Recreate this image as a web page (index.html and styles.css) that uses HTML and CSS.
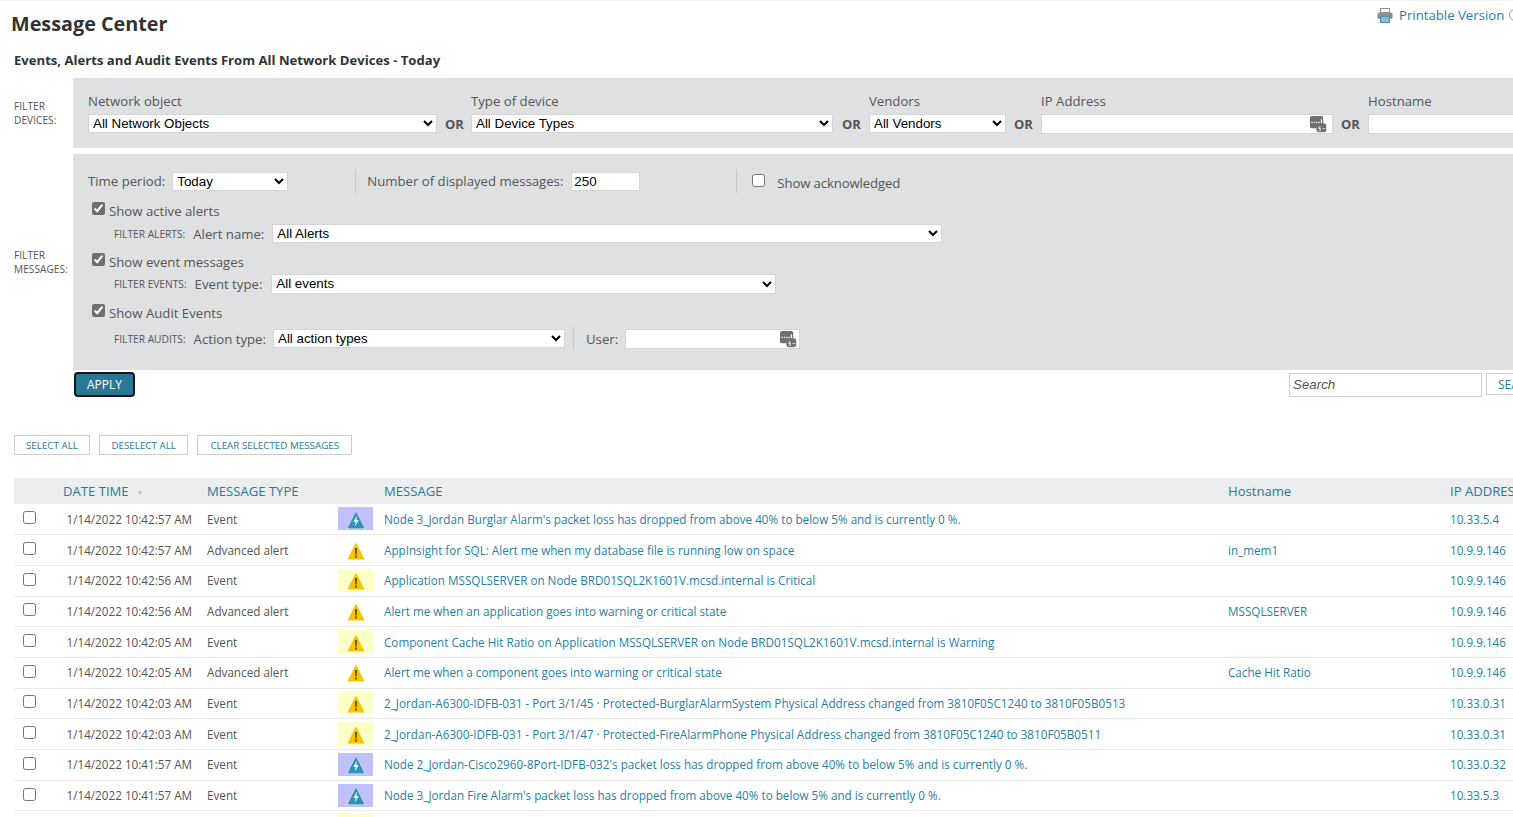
FILE: index.html
```html
<!DOCTYPE html>
<html lang="en">
<head>
<meta charset="utf-8">
<title>Message Center</title>
<link rel="stylesheet" href="styles.css">
</head>
<body>
<svg class="defs" width="0" height="0" aria-hidden="true">
  <symbol id="ico-crit" viewBox="0 0 20 20">
    <path d="M10 2 19.2 20H.8z" fill="#fff" opacity=".7"/>
    <path d="M10 3.5 17.8 19H2.2z" fill="#2e93b4" stroke="#2e93b4" stroke-linejoin="round"/>
    <path d="M11 6.5 7.4 13h2.3l-.9 4.5 3.9-6.6h-2.3z" fill="#fff"/>
  </symbol>
  <symbol id="ico-warn" viewBox="0 0 20 20">
    <path d="M10 4 17.4 18.8H2.6z" fill="#f6c500" stroke="#f6c500" stroke-width="1.6" stroke-linejoin="round"/>
    <path d="M8.9 8h2.2L10.7 14.5H9.3zM9 15.4h2v2.2H9z" fill="#6b5200"/>
  </symbol>
  <symbol id="ico-ip" viewBox="0 0 18 18">
    <rect x="0" y="0" width="14" height="13" rx="2" fill="#6f6f6f"/>
    <rect x="7" y="8" width="10" height="9" rx="2" fill="#6f6f6f" stroke="#8a8a8a" stroke-width=".5"/>
    <path d="M1.5 6h1.4v1.4H1.5zM4 6h1.4v1.4H4zM6.5 6h1.4v1.4H6.5zM9 6h1.4v1.4H9zM11.5 3.5h1.2v3.9h-1.2z" fill="#fff"/>
    <path d="M9 11h2.4v1H10v.6h1.4V15.5H9v-.8h1.4v-1H9zM13 12.6h3v1h-3z" fill="#e8e8e8"/>
  </symbol>
</svg>
<div class="page">
  <header class="top">
    <h1 class="title">Message Center</h1>
    <div class="print">
      <svg class="print-ico" width="16" height="15" viewBox="0 0 16 15">
        <rect x="3.5" y=".5" width="9" height="4" fill="none" stroke="#8a9299"/>
        <rect x=".5" y="4.5" width="15" height="6.5" rx="1.5" fill="#8a9299"/>
        <rect x="3.5" y="8.5" width="9" height="6" fill="#7cc0dc" stroke="#5c8ea6"/>
      </svg>
      <a class="print-link">Printable Version</a>
      <span class="info-circle"></span>
    </div>
  </header>
  <h2 class="subtitle">Events, Alerts and Audit Events From All Network Devices - Today</h2>

  <section class="filter-block devices">
    <div class="side-label">FILTER<br>DEVICES:</div>
    <div class="panel panel-devices">
      <div class="field f-object"><label class="flabel">Network object</label><select class="sel"><option>All Network Objects</option></select></div>
      <span class="or or-first">OR</span>
      <div class="field f-type"><label class="flabel">Type of device</label><select class="sel"><option>All Device Types</option></select></div>
      <span class="or or-wide">OR</span>
      <div class="field f-vendor"><label class="flabel">Vendors</label><select class="sel"><option>All Vendors</option></select></div>
      <span class="or">OR</span>
      <div class="field f-ip"><label class="flabel">IP Address</label><div class="input-ico tall"><svg class="ip-ico"><use href="#ico-ip"/></svg></div></div>
      <span class="or">OR</span>
      <div class="field f-host"><label class="flabel">Hostname</label><div class="input-ico tall"></div></div>
    </div>
  </section>

  <section class="filter-block messages">
    <div class="side-label side-msg">FILTER<br>MESSAGES:</div>
    <div class="panel panel-messages">
      <div class="row-time">
        <span class="lbl">Time period:</span>
        <select class="sel sel-time"><option>Today</option></select>
        <span class="vsep sep-a"></span>
        <span class="lbl">Number of displayed messages:</span>
        <input class="txt txt-num" type="text" value="250">
        <span class="vsep sep-b"></span>
        <input class="chk chk-plain" type="checkbox">
        <span class="lbl lbl-ack">Show acknowledged</span>
      </div>
      <div class="chk-row chk-first"><input class="chk chk-on" type="checkbox" checked><span class="lbl">Show active alerts</span></div>
      <div class="sub-row sub-alerts"><span class="mini">FILTER ALERTS:</span><span class="lbl">Alert name:</span><select class="sel sel-alert"><option>All Alerts</option></select></div>
      <div class="chk-row"><input class="chk chk-on" type="checkbox" checked><span class="lbl">Show event messages</span></div>
      <div class="sub-row sub-events"><span class="mini">FILTER EVENTS:</span><span class="lbl">Event type:</span><select class="sel sel-event"><option>All events</option></select></div>
      <div class="chk-row"><input class="chk chk-on" type="checkbox" checked><span class="lbl">Show Audit Events</span></div>
      <div class="sub-row sub-audits"><span class="mini">FILTER AUDITS:</span><span class="lbl">Action type:</span><select class="sel sel-action"><option>All action types</option></select><span class="vsep sep-c"></span><span class="lbl">User:</span><div class="input-ico user"><svg class="ip-ico"><use href="#ico-ip"/></svg></div></div>
    </div>
  </section>

  <div class="actions">
    <button class="apply" type="button">APPLY</button>
    <div class="search">
      <input class="search-input" type="text" placeholder="Search">
      <button class="search-btn" type="button">SEARCH</button>
    </div>
  </div>

  <div class="bulk">
    <button class="bulk-btn b-select" type="button">SELECT ALL</button>
    <button class="bulk-btn b-deselect" type="button">DESELECT ALL</button>
    <button class="bulk-btn b-clear" type="button">CLEAR SELECTED MESSAGES</button>
  </div>

  <table class="grid">
    <colgroup><col class="c-chk"><col class="c-date"><col class="c-type"><col class="c-ico"><col class="c-msg"><col class="c-host"><col class="c-ip"></colgroup>
    <thead>
      <tr><th></th><th>DATE TIME <span class="sort">▾</span></th><th>MESSAGE TYPE</th><th></th><th>MESSAGE</th><th>Hostname</th><th>IP ADDRESS</th></tr>
    </thead>
    <tbody>
      <tr><td class="cc"><input type="checkbox" class="chk"></td><td class="date">1/14/2022 10:42:57 AM</td><td>Event</td><td><div class="ib blue"><svg class="ic"><use href="#ico-crit"/></svg></div></td><td class="link">Node 3_Jordan Burglar Alarm's packet loss has dropped from above 40% to below 5% and is currently 0 %.</td><td class="link"></td><td class="link">10.33.5.4</td></tr>
      <tr><td class="cc"><input type="checkbox" class="chk"></td><td class="date">1/14/2022 10:42:57 AM</td><td>Advanced alert</td><td><div class="ib"><svg class="ic"><use href="#ico-warn"/></svg></div></td><td class="link">AppInsight for SQL: Alert me when my database file is running low on space</td><td class="link">in_mem1</td><td class="link">10.9.9.146</td></tr>
      <tr><td class="cc"><input type="checkbox" class="chk"></td><td class="date">1/14/2022 10:42:56 AM</td><td>Event</td><td><div class="ib yellow"><svg class="ic"><use href="#ico-warn"/></svg></div></td><td class="link">Application MSSQLSERVER on Node BRD01SQL2K1601V.mcsd.internal is Critical</td><td class="link"></td><td class="link">10.9.9.146</td></tr>
      <tr><td class="cc"><input type="checkbox" class="chk"></td><td class="date">1/14/2022 10:42:56 AM</td><td>Advanced alert</td><td><div class="ib"><svg class="ic"><use href="#ico-warn"/></svg></div></td><td class="link">Alert me when an application goes into warning or critical state</td><td class="link">MSSQLSERVER</td><td class="link">10.9.9.146</td></tr>
      <tr><td class="cc"><input type="checkbox" class="chk"></td><td class="date">1/14/2022 10:42:05 AM</td><td>Event</td><td><div class="ib yellow"><svg class="ic"><use href="#ico-warn"/></svg></div></td><td class="link">Component Cache Hit Ratio on Application MSSQLSERVER on Node BRD01SQL2K1601V.mcsd.internal is Warning</td><td class="link"></td><td class="link">10.9.9.146</td></tr>
      <tr><td class="cc"><input type="checkbox" class="chk"></td><td class="date">1/14/2022 10:42:05 AM</td><td>Advanced alert</td><td><div class="ib"><svg class="ic"><use href="#ico-warn"/></svg></div></td><td class="link">Alert me when a component goes into warning or critical state</td><td class="link">Cache Hit Ratio</td><td class="link">10.9.9.146</td></tr>
      <tr><td class="cc"><input type="checkbox" class="chk"></td><td class="date">1/14/2022 10:42:03 AM</td><td>Event</td><td><div class="ib yellow"><svg class="ic"><use href="#ico-warn"/></svg></div></td><td class="link">2_Jordan-A6300-IDFB-031 - Port 3/1/45 · Protected-BurglarAlarmSystem Physical Address changed from 3810F05C1240 to 3810F05B0513</td><td class="link"></td><td class="link">10.33.0.31</td></tr>
      <tr><td class="cc"><input type="checkbox" class="chk"></td><td class="date">1/14/2022 10:42:03 AM</td><td>Event</td><td><div class="ib yellow"><svg class="ic"><use href="#ico-warn"/></svg></div></td><td class="link">2_Jordan-A6300-IDFB-031 - Port 3/1/47 · Protected-FireAlarmPhone Physical Address changed from 3810F05C1240 to 3810F05B0511</td><td class="link"></td><td class="link">10.33.0.31</td></tr>
      <tr><td class="cc"><input type="checkbox" class="chk"></td><td class="date">1/14/2022 10:41:57 AM</td><td>Event</td><td><div class="ib blue"><svg class="ic"><use href="#ico-crit"/></svg></div></td><td class="link">Node 2_Jordan-Cisco2960-8Port-IDFB-032's packet loss has dropped from above 40% to below 5% and is currently 0 %.</td><td class="link"></td><td class="link">10.33.0.32</td></tr>
      <tr><td class="cc"><input type="checkbox" class="chk"></td><td class="date">1/14/2022 10:41:57 AM</td><td>Event</td><td><div class="ib blue"><svg class="ic"><use href="#ico-crit"/></svg></div></td><td class="link">Node 3_Jordan Fire Alarm's packet loss has dropped from above 40% to below 5% and is currently 0 %.</td><td class="link"></td><td class="link">10.33.5.3</td></tr>
      <tr><td></td><td></td><td></td><td><div class="ib yellow"></div></td><td></td><td></td><td></td></tr>
    </tbody>
  </table>
</div>
</body>
</html>
```
FILE: styles.css
```css
* { box-sizing: border-box; }
html, body { margin: 0; height: 100%; overflow: hidden; background: #fff; }
body { font-family: "Open Sans", "Liberation Sans", sans-serif; color: #555; font-size: 13px; }
.defs { position: absolute; }
.page { width: 1700px; border-top: 1px solid #f6f6f6; }

.top { display: flex; justify-content: flex-start; height: 48px; padding-left: 11px; }
.title { margin: 9px 0 0; font-size: 19.8px; line-height: 28px; font-weight: 700; color: #333; width: 1366px; }
.print { display: flex; align-items: center; height: 28px; }
.print-ico { margin-right: 6px; }
.print-link { color: #1f7fa8; font-size: 13.2px; }
.info-circle { width: 12px; height: 12px; margin-left: 5px; border: 1px solid #999; border-radius: 50%; }
.subtitle { margin: 0 0 7px 14px; font-size: 13.12px; line-height: 22px; font-weight: 700; color: #333; height: 22px; }

.filter-block { display: flex; margin-bottom: 6px; }
.side-label { width: 73px; padding-left: 14px; font-size: 10.2px; line-height: 14px; color: #555; }
.devices .side-label { padding-top: 21px; }
.side-msg { padding-top: 94px; }
.panel { flex: 1; background: #dfe0e2; }
.panel-devices { height: 70px; display: flex; align-items: flex-start; padding: 14px 0 0 15px; }
.field { display: flex; flex-direction: column; }
.flabel { font-size: 13.2px; line-height: 18px; height: 22px; color: #555; }
.f-object { width: 349px; }
.f-type { width: 362px; }
.f-vendor { width: 137px; }
.f-ip { width: 292px; }
.f-host { width: 300px; }
.or { width: 35px; padding: 23px 0 0 8px; font-size: 13px; font-weight: 700; line-height: 18px; color: #555; }
.or-first { width: 34px; }
.or-wide { width: 36px; padding-left: 9px; }

.sel { font-family: "Liberation Sans", Arial, sans-serif; font-size: 13.333px; height: 19px; padding: 0; background: #fff; border: 1px solid #d5d5d5; color: #000; }
.txt { font-family: "Liberation Sans", Arial, sans-serif; font-size: 13.333px; height: 19px; padding: 0 2px; background: #fff; border: 1px solid #d5d5d5; color: #000; }
.input-ico { position: relative; background: #fff; border: 1px solid #d5d5d5; height: 20px; }
.ip-ico { position: absolute; right: 5px; top: 0; width: 17px; height: 19px; }
.user { width: 175px; }
.user .ip-ico { right: 2px; }

.panel-messages { height: 216px; padding: 13px 0 0 15px; }
.lbl { font-size: 13.2px; line-height: 18px; color: #555; white-space: nowrap; }
.row-time { display: flex; align-items: center; height: 28px; margin-bottom: 5px; }
.row-time .sel-time { width: 116px; margin-left: 7px; }
.vsep { width: 1px; height: 24px; background: #c8c9cb; flex: none; }
.sep-a { margin: 0 11px 0 67px; }
.txt-num { width: 69px; margin-left: 8px; }
.sep-b { margin: 0 15px 0 96px; }
.chk { width: 13px; height: 13px; margin: 0; }
.chk-plain { margin-top: -1px; }
.lbl-ack { margin-left: 12px; margin-top: 4px; letter-spacing: -.01em; }
.chk-on { accent-color: #6f6f6f; }
.chk-row { display: flex; align-items: center; height: 20px; padding-left: 4px; gap: 4px; }
.chk-row .chk { margin-top: -4px; }
.chk-row .lbl { margin-top: 2px; }
.sub-row { display: flex; align-items: center; padding-left: 26px; height: 23px; }
.mini { font-size: 10.2px; margin-right: 8px; flex: none; color: #555; white-space: nowrap; }
.sub-alerts { margin: 2px 0 6px; }
.sub-events { margin: 1px 0 7px; }
.sub-audits { margin: 5px 0 0; }
.sel-alert { width: 670px; margin-left: 8px; }
.sel-event { width: 505px; height: 20px; margin-left: 9px; }
.sel-action { width: 292px; margin-left: 7px; }
.sep-c { margin: 0 12px 0 8px; }
.sub-audits .user { margin-left: 7px; }

.actions { display: flex; align-items: flex-start; margin-top: -4px; padding-left: 74px; height: 63px; }
.apply { width: 61px; height: 25px; padding: 0; border: 2px solid #14181c; border-radius: 4px; background: #297994; color: #fff; font-family: inherit; font-size: 12px; }
.search { display: flex; margin-left: 1154px; padding-top: 1px; }
.search-input { width: 193px; height: 24px; padding: 0 3px 2px; font-family: "Liberation Sans", Arial, sans-serif; font-size: 13.333px; font-style: italic; border: 1px solid #d0d0d0; }
.search-input::placeholder { color: #555; opacity: 1; }
.search-btn { width: 70px; height: 22px; margin-left: 4px; padding: 0 0 0 11px; text-align: left; border: 1px solid #d0d0d0; background: #fff; color: #1f7fa8; font-family: inherit; font-size: 12px; }

.bulk { display: flex; gap: 9px; padding-left: 14px; height: 43px; }
.bulk-btn { height: 20px; border: 1px solid #ccc; background: #fff; color: #297994; font-family: inherit; font-size: 9.8px; white-space: nowrap; }
.b-select { padding: 0 11px; }
.b-deselect { padding: 0 11.5px; }
.b-clear { padding: 0 12px; }

.grid { margin-left: 14px; width: 1686px; table-layout: fixed; border-collapse: collapse; }
.c-chk { width: 49px; }
.c-date { width: 144px; }
.c-type { width: 131px; }
.c-ico { width: 46px; }
.c-msg { width: 844px; }
.c-host { width: 222px; }
.c-ip { width: 250px; }
.grid th { height: 26px; padding: 0; text-align: left; font-weight: 400; font-size: 13.1px; color: #297994; background: #ecedef; white-space: nowrap; overflow: hidden; }
.sort { font-size: 7px; color: #bbb; margin-left: 6px; vertical-align: middle; }
.grid td { height: 30.7px; padding: 0 0 1px; font-size: 11.7px; color: #555; border-bottom: 1px solid #eaeaea; white-space: nowrap; vertical-align: middle; }
.grid td.cc { padding: 0 0 3px 9px; }
.grid td.cc .chk { display: block; }
.grid td.date { padding-left: 3.5px; }
.grid td.link { color: #1f7fa8; }
.ib { width: 35px; height: 23px; display: flex; align-items: center; justify-content: center; }
.ic { width: 20px; height: 20px; }
.blue { background: #c0c0fb; }
.yellow { background: #ffffc8; }
```
